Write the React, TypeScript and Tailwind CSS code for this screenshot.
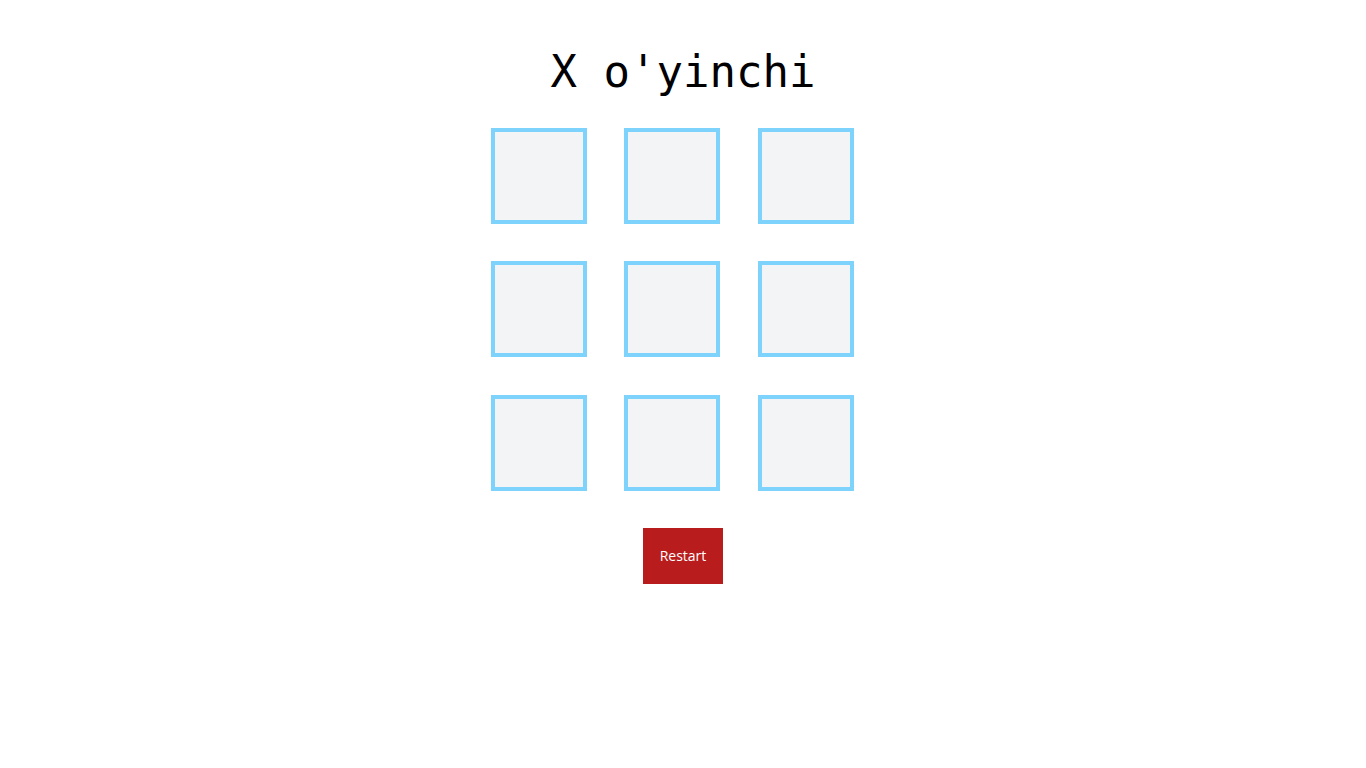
const App = () => {
  const cells = Array.from({ length: 9 });

  return (
    <div className="min-h-screen bg-white flex flex-col items-center pt-[44px]">
      <h1 className="text-[44px] leading-[56px] font-['DejaVu_Sans_Mono',monospace] text-black mb-[28px]">
        X o'yinchi
      </h1>
      <div className="grid grid-cols-3 gap-4 w-96">
        {cells.map((_, i) => (
          <div key={i} className="aspect-square">
            <button className="w-24 h-24 bg-[#f3f4f6] border-4 border-[#7dd3fc]" />
          </div>
        ))}
      </div>
      <button className="mt-4 h-14 w-20 bg-[#b91c1c] text-white text-sm font-['Open_Sans',sans-serif]">
        Restart
      </button>
    </div>
  );
};

export default App;
